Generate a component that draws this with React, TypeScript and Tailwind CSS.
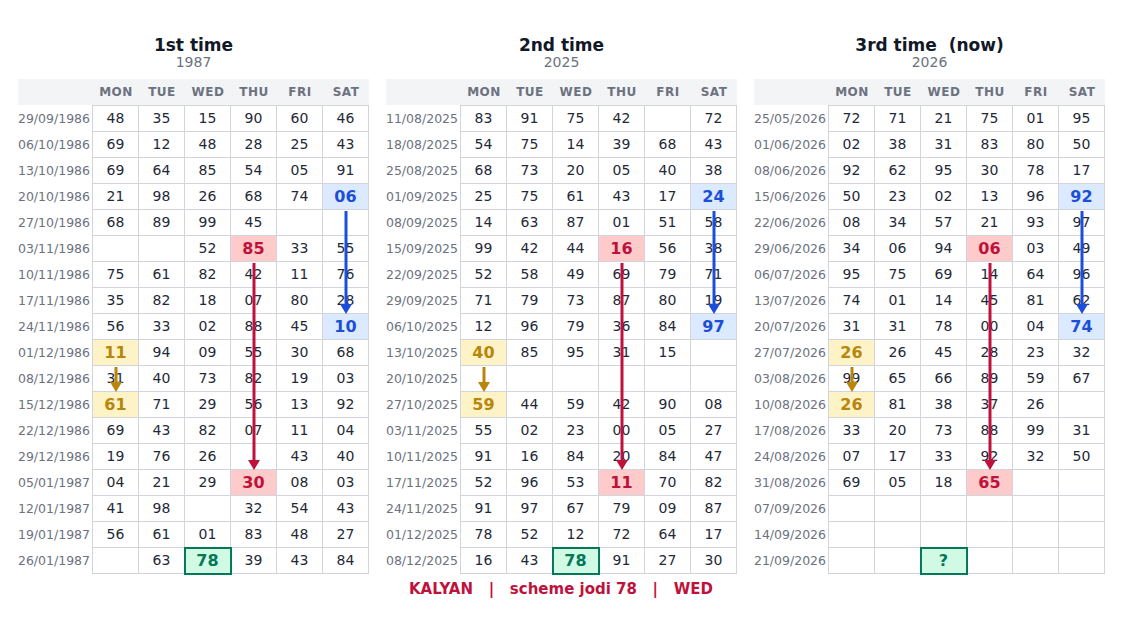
const DAYS = ["MON", "TUE", "WED", "THU", "FRI", "SAT"];

type Table = { title: string; year: string; rows: [string, string][] };

const tables: Table[] = [
  {
    title: "1st time",
    year: "1987",
    rows: [
      ["29/09/1986", "48 35 15 90 60 46"],
      ["06/10/1986", "69 12 48 28 25 43"],
      ["13/10/1986", "69 64 85 54 05 91"],
      ["20/10/1986", "21 98 26 68 74 06"],
      ["27/10/1986", "68 89 99 45 - -"],
      ["03/11/1986", "- - 52 85 33 55"],
      ["10/11/1986", "75 61 82 42 11 76"],
      ["17/11/1986", "35 82 18 07 80 28"],
      ["24/11/1986", "56 33 02 88 45 10"],
      ["01/12/1986", "11 94 09 55 30 68"],
      ["08/12/1986", "31 40 73 82 19 03"],
      ["15/12/1986", "61 71 29 56 13 92"],
      ["22/12/1986", "69 43 82 07 11 04"],
      ["29/12/1986", "19 76 26 - 43 40"],
      ["05/01/1987", "04 21 29 30 08 03"],
      ["12/01/1987", "41 98 - 32 54 43"],
      ["19/01/1987", "56 61 01 83 48 27"],
      ["26/01/1987", "- 63 78 39 43 84"],
    ],
  },
  {
    title: "2nd time",
    year: "2025",
    rows: [
      ["11/08/2025", "83 91 75 42 - 72"],
      ["18/08/2025", "54 75 14 39 68 43"],
      ["25/08/2025", "68 73 20 05 40 38"],
      ["01/09/2025", "25 75 61 43 17 24"],
      ["08/09/2025", "14 63 87 01 51 58"],
      ["15/09/2025", "99 42 44 16 56 38"],
      ["22/09/2025", "52 58 49 69 79 71"],
      ["29/09/2025", "71 79 73 87 80 19"],
      ["06/10/2025", "12 96 79 36 84 97"],
      ["13/10/2025", "40 85 95 31 15 -"],
      ["20/10/2025", "- - - - - -"],
      ["27/10/2025", "59 44 59 42 90 08"],
      ["03/11/2025", "55 02 23 00 05 27"],
      ["10/11/2025", "91 16 84 20 84 47"],
      ["17/11/2025", "52 96 53 11 70 82"],
      ["24/11/2025", "91 97 67 79 09 87"],
      ["01/12/2025", "78 52 12 72 64 17"],
      ["08/12/2025", "16 43 78 91 27 30"],
    ],
  },
  {
    title: "3rd time  (now)",
    year: "2026",
    rows: [
      ["25/05/2026", "72 71 21 75 01 95"],
      ["01/06/2026", "02 38 31 83 80 50"],
      ["08/06/2026", "92 62 95 30 78 17"],
      ["15/06/2026", "50 23 02 13 96 92"],
      ["22/06/2026", "08 34 57 21 93 97"],
      ["29/06/2026", "34 06 94 06 03 49"],
      ["06/07/2026", "95 75 69 14 64 96"],
      ["13/07/2026", "74 01 14 45 81 62"],
      ["20/07/2026", "31 31 78 00 04 74"],
      ["27/07/2026", "26 26 45 28 23 32"],
      ["03/08/2026", "99 65 66 89 59 67"],
      ["10/08/2026", "26 81 38 37 26 -"],
      ["17/08/2026", "33 20 73 88 99 31"],
      ["24/08/2026", "07 17 33 92 32 50"],
      ["31/08/2026", "69 05 18 65 - -"],
      ["07/09/2026", "- - - - - -"],
      ["14/09/2026", "- - - - - -"],
      ["21/09/2026", "- - ? - - -"],
    ],
  },
];

// same spots are marked in every table
const marks: Record<string, string> = {
  "3-5": "blue",
  "8-5": "blue",
  "5-3": "red",
  "14-3": "red",
  "9-0": "gold",
  "11-0": "gold",
  "17-2": "green",
};

const arrows = [
  { col: 5, from: 3, to: 8, color: "#1d4ed8" },
  { col: 3, from: 5, to: 14, color: "#be123c" },
  { col: 0, from: 9, to: 11, color: "#b8860b" },
];

const cellBase =
  "h-[26px] border-r border-b border-[#d1d5db] flex items-center justify-center";

function cellClass(kind?: string) {
  if (kind === "blue") return `${cellBase} bg-[#dbeafe] text-[#1d4ed8] font-bold text-[16px]`;
  if (kind === "red") return `${cellBase} bg-[#fecaca] text-[#be123c] font-bold text-[16px]`;
  if (kind === "gold") return `${cellBase} bg-[#fef3c7] text-[#b8860b] font-bold text-[16px]`;
  if (kind === "green")
    return `${cellBase} relative z-10 bg-[#d1fae5] text-[#047857] font-bold text-[16px] outline-2 outline-[#047857] -outline-offset-1`;
  return `${cellBase} text-[#1f2937] text-[14px]`;
}

function Arrow({ col, from, to, color }: { col: number; from: number; to: number; color: string }) {
  const top = (from + 1) * 26 + 1;
  const h = to * 26 - top;
  return (
    <svg
      className="absolute z-20 pointer-events-none"
      style={{ left: col * 46 + 23 - 7, top, width: 14, height: h }}
      viewBox={`0 0 14 ${h}`}
    >
      <line x1="7" y1="0" x2="7" y2={h - 8} stroke={color} strokeWidth="3" />
      <polygon points={`1,${h - 10} 13,${h - 10} 7,${h}`} fill={color} />
    </svg>
  );
}

function Chart({ t }: { t: Table }) {
  return (
    <div className="w-[351px]">
      <div className="text-center">
        <div className="mt-[1px] text-[17px] leading-[20px] font-bold text-[#111827] whitespace-pre">{t.title}</div>
        <div className="text-[14px] leading-[15px] text-[#6b7280]">{t.year}</div>
      </div>
      <div className="mt-[9px] h-[26px] bg-[#f3f4f6] grid grid-cols-[75px_repeat(6,46px)] items-center">
        <div />
        {DAYS.map((d) => (
          <div key={d} className="text-center text-[12px] font-bold tracking-[0.5px] text-[#6b7280]">
            {d}
          </div>
        ))}
      </div>
      <div className="flex">
        <div className="w-[74px] pt-[1px] flex flex-col">
          {t.rows.map(([date]) => (
            <div key={date} className="h-[26px] flex items-center justify-end pr-[2px] text-[12.5px] text-[#6b7280]">
              {date}
            </div>
          ))}
        </div>
        <div className="relative grid grid-cols-[repeat(6,46px)] border-l border-t border-[#d1d5db]">
          {t.rows.map(([date, vals], r) =>
            vals.split(" ").map((v, c) => (
              <div key={date + c} className={cellClass(marks[`${r}-${c}`])}>
                {v === "-" ? "" : v}
              </div>
            ))
          )}
          {arrows.map((a) => (
            <Arrow key={a.col} {...a} />
          ))}
        </div>
      </div>
    </div>
  );
}

export default function App() {
  return (
    <div className="w-[1122px] h-[632px] bg-white font-['DejaVu_Sans',sans-serif]">
      <div className="flex gap-[17px] pl-[18px] pt-[34px]">
        {tables.map((t) => (
          <Chart key={t.title} t={t} />
        ))}
      </div>
      <div className="mt-[5px] text-center text-[15px] leading-[20px] font-bold text-[#be123c] whitespace-pre">
        {"KALYAN   |   scheme jodi 78   |   WED"}
      </div>
    </div>
  );
}
